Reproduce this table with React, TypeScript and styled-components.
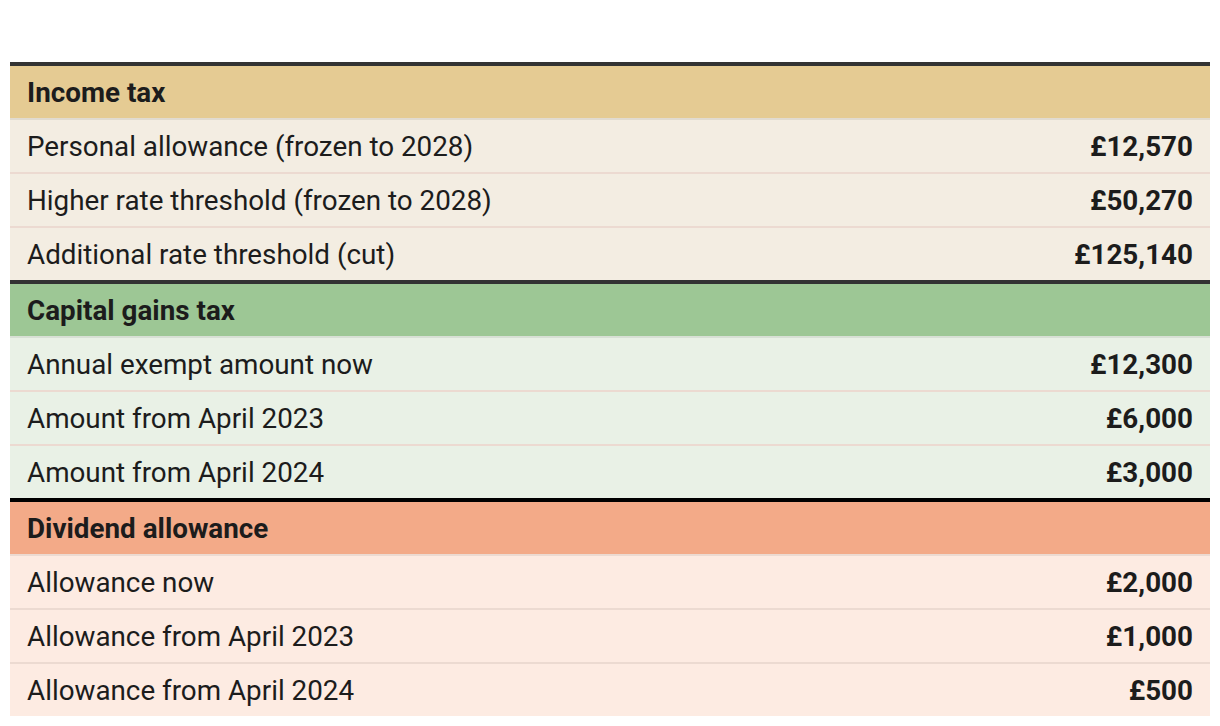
import React from "react";
import styled, { createGlobalStyle } from "styled-components";

const Global = createGlobalStyle`
  html, body { margin: 0; padding: 0; background: #ffffff; }
  body { font-family: Roboto, "Liberation Sans", Arial, sans-serif; color: #1c1c1c; }
`;

type Theme = { head: string; row: string; line: string; top: string };

const themes: Record<string, Theme> = {
  income: { head: "#e5cb93", row: "#f3ede2", line: "#e1dbd0", top: "#333333" },
  cgt: { head: "#9dc795", row: "#e9f1e6", line: "#d8e0d5", top: "#333333" },
  div: { head: "#f3aa88", row: "#fdebe2", line: "#ecdad1", top: "#000000" },
};

const Wrapper = styled.div`
  padding: 62px 10px 10px 10px;
  display: flex;
  flex-direction: column;
`;

const Section = styled.section<{ $t: Theme }>`
  display: flex;
  flex-direction: column;
  border-top: 4px solid ${(p) => p.$t.top};
`;

const Head = styled.div<{ $t: Theme }>`
  height: 52px;
  display: flex;
  align-items: center;
  padding: 0 17px;
  background: ${(p) => p.$t.head};
  border-bottom: 2px solid ${(p) => p.$t.line};
  font-weight: 700;
  font-size: 27.8px;
`;

const Row = styled.div<{ $t: Theme }>`
  height: 52px;
  display: flex;
  align-items: center;
  justify-content: space-between;
  padding: 0 17px;
  background: ${(p) => p.$t.row};
  font-size: 27.8px;
  & + & {
    border-top: 2px solid ${(p) => p.$t.line};
  }
`;

const Label = styled.span`
  font-weight: 400;
`;

const Value = styled.span`
  font-weight: 700;
`;

const data: { key: string; title: string; rows: [string, string][] }[] = [
  {
    key: "income",
    title: "Income tax",
    rows: [
      ["Personal allowance (frozen to 2028)", "£12,570"],
      ["Higher rate threshold (frozen to 2028)", "£50,270"],
      ["Additional rate threshold (cut)", "£125,140"],
    ],
  },
  {
    key: "cgt",
    title: "Capital gains tax",
    rows: [
      ["Annual exempt amount now", "£12,300"],
      ["Amount from April 2023", "£6,000"],
      ["Amount from April 2024", "£3,000"],
    ],
  },
  {
    key: "div",
    title: "Dividend allowance",
    rows: [
      ["Allowance now", "£2,000"],
      ["Allowance from April 2023", "£1,000"],
      ["Allowance from April 2024", "£500"],
    ],
  },
];

export default function App() {
  return (
    <>
      <Global />
      <Wrapper>
        {data.map((s) => {
          const t = themes[s.key];
          return (
            <Section key={s.key} $t={t}>
              <Head $t={t}>{s.title}</Head>
              {s.rows.map(([l, v]) => (
                <Row key={l} $t={t}>
                  <Label>{l}</Label>
                  <Value>{v}</Value>
                </Row>
              ))}
            </Section>
          );
        })}
      </Wrapper>
    </>
  );
}
